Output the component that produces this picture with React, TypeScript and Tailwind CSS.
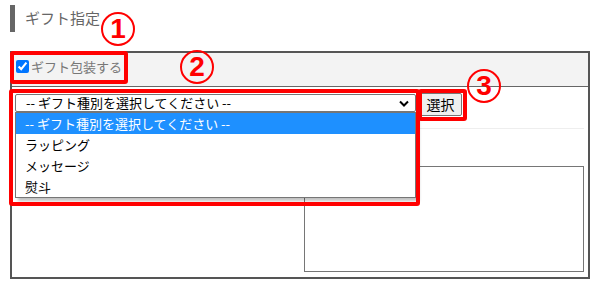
import React from 'react';

function Marker({ n, className }: { n: string; className: string }) {
    return (
        <div className={`absolute w-[34px] h-[34px] rounded-full border-[2.5px] border-[#ff0000] flex items-center justify-center text-[#ff0000] text-[28px] font-bold leading-none font-['Liberation_Sans',sans-serif] ${className}`}>
            {n}
        </div>
    );
}

export default function App() {
    const options = ['-- ギフト種別を選択してください --', 'ラッピング', 'メッセージ', '熨斗'];

    return (
        <div className="relative w-[602px] h-[291px] bg-white overflow-hidden font-['Noto_Sans_CJK_JP','Noto_Sans',sans-serif]">
            <div className="pl-[10px] pr-[12px] pt-[5px]">
                {/* Heading */}
                <h2 className="h-[27px] border-l-[5px] border-[#666] pl-[10px] flex items-center text-[15px] text-[#666]">
                    ギフト指定
                </h2>

                {/* Panel */}
                <div className="mt-[19px] h-[228px] border-2 border-[#555]">
                    <div className="h-[34px] bg-[#f3f3f3] border-b border-[#666] flex items-start pt-[7px] pl-[4px] gap-[2px]">
                        <input type="checkbox" checked readOnly className="w-[13px] h-[13px] m-0 accent-[#0075ff]" />
                        <span className="text-[13px] leading-[13px] text-[#777]">ギフト包装する</span>
                    </div>

                    <div className="pl-[3px] pr-[4px] pt-[7px]">
                        <div className="flex items-start gap-[3px]">
                            <div className="relative">
                                <div className="w-[401px] h-[18px] border border-[#767676] rounded-[2px] bg-white flex items-center justify-between pl-[10px] pr-[6px] text-[13px] text-black">
                                    <span>-- ギフト種別を選択してください --</span>
                                    <svg width="10" height="7" viewBox="0 0 10 7" fill="none">
                                        <path d="M1 1.5 L5 5.5 L9 1.5" stroke="#000" strokeWidth="2" />
                                    </svg>
                                </div>
                                {/* Open list */}
                                <div className="absolute left-0 top-[18px] w-[401px] border border-[#767676] bg-white shadow-[3px_3px_3px_rgba(0,0,0,0.25)] z-10">
                                    {options.map((o, i) => (
                                        <div
                                            key={o}
                                            className={`h-[21px] flex items-center pl-[9px] text-[13px] ${i === 0 ? 'bg-[#1e90ff] text-white' : 'text-black'}`}
                                        >
                                            {o}
                                        </div>
                                    ))}
                                </div>
                            </div>
                            <button className="w-[43px] h-[23px] -mt-[1px] border border-[#767676] rounded-[2px] bg-[#efefef] text-[14px] text-black flex items-center justify-center">
                                選択
                            </button>
                        </div>

                        <div className="mt-[12px] border-t border-[#eee]" />

                        <div className="flex justify-end mt-[37px]">
                            <div className="w-[280px] h-[106px] border border-[#767676]" />
                        </div>
                    </div>
                </div>
            </div>

            {/* Annotations */}
            <div className="absolute left-[10px] top-[51px] w-[118px] h-[33px] border-4 border-[#ff0000] rounded-[3px]" />
            <div className="absolute left-[9px] top-[89px] w-[411px] h-[117px] border-4 border-[#ff0000] rounded-[3px] z-20" />
            <div className="absolute left-[418px] top-[89px] w-[49px] h-[32px] border-4 border-[#ff0000] rounded-[3px]" />
            <Marker n="1" className="left-[101px] top-[12px]" />
            <Marker n="2" className="left-[180px] top-[50px]" />
            <Marker n="3" className="left-[467px] top-[69px]" />
        </div>
    );
}
